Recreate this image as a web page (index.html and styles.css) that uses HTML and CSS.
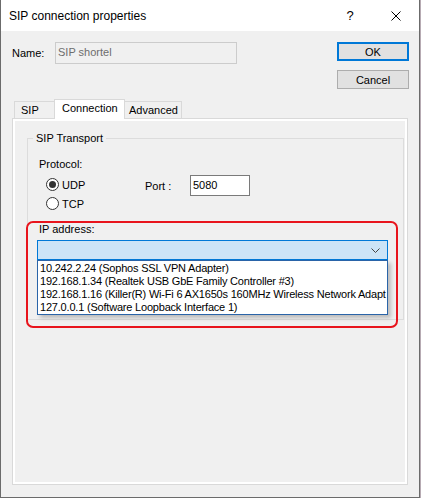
FILE: index.html
```html
<!DOCTYPE html>
<html lang="en">
<head>
    <meta charset="UTF-8">
    <title>SIP connection properties</title>
    <link rel="stylesheet" href="styles.css">
</head>
<body>
    <div class="window">
        <div class="titlebar">
            <span class="title">SIP connection properties</span>
            <span class="caption-btn">?</span>
            <span class="caption-btn">
                <svg width="10" height="10" viewBox="0 0 10 10"><path d="M0.5 0.5L9.5 9.5M9.5 0.5L0.5 9.5" stroke="#000" stroke-width="1" fill="none"/></svg>
            </span>
        </div>

        <div class="top-row">
            <label class="name-label" for="name">Name:</label>
            <input class="name-input" id="name" type="text" value="SIP shortel" disabled>
            <div class="buttons">
                <button class="btn btn-default">OK</button>
                <button class="btn">Cancel</button>
            </div>
        </div>

        <div class="tabs">
            <div class="tab tab-sip">SIP</div>
            <div class="tab active">Connection</div>
            <div class="tab tab-adv">Advanced</div>
        </div>

        <div class="tab-page">
            <div class="page-inner">
                <fieldset class="group">
                    <legend>SIP Transport</legend>
                    <div class="group-body">
                        <div class="protocol-label">Protocol:</div>
                        <div class="protocol-row">
                            <div class="radios">
                                <label class="radio"><input type="radio" name="proto" checked> UDP</label>
                                <label class="radio"><input type="radio" name="proto"> TCP</label>
                            </div>
                            <label class="port-label" for="port">Port :</label>
                            <input class="port-input" id="port" type="text" value="5080">
                        </div>

                        <div class="ip-label">IP address:</div>
                        <div class="combo">
                            <svg width="9" height="5" viewBox="0 0 9 5"><path d="M0.5 0.5L4.5 4.5L8.5 0.5" stroke="#444" stroke-width="1" fill="none"/></svg>
                        </div>
                        <ul class="dropdown">
                            <li>10.242.2.24 (Sophos SSL VPN Adapter)</li>
                            <li>192.168.1.34 (Realtek USB GbE Family Controller #3)</li>
                            <li>192.168.1.16 (Killer(R) Wi-Fi 6 AX1650s 160MHz Wireless Network Adapt</li>
                            <li>127.0.0.1 (Software Loopback Interface 1)</li>
                        </ul>
                    </div>
                </fieldset>
            </div>
        </div>

        <!-- annotation drawn over the dialog -->
        <div class="highlight"></div>
    </div>
</body>
</html>
```

FILE: styles.css
```css
body {
    margin: 0;
    background: #b7abb3;
    font-family: "Liberation Sans", Arial, sans-serif;
    font-size: 11px;
    color: #000;
}
.window {
    position: relative;
    width: 418px;
    height: 497px;
    background: #f0f0f0;
    border: 1px solid #6b6b6b;
    border-top: none;
}
.titlebar {
    height: 31px;
    background: #fff;
    display: flex;
    align-items: center;
    padding-left: 8px;
    font-size: 12px;
}
.title {
    flex: 1;
}
.caption-btn {
    width: 46px;
    height: 31px;
    display: flex;
    align-items: center;
    justify-content: center;
    font-size: 13px;
}
.top-row {
    display: flex;
    align-items: flex-start;
    padding: 11px 10px 0 11px;
}
.name-label {
    width: 43px;
    line-height: 22px;
}
.name-input {
    width: 182px;
    height: 22px;
    box-sizing: border-box;
    border: 1px solid #cccccc;
    background: #f0f0f0;
    color: #6d6d6d;
    font: inherit;
    padding: 0 2px 2px;
    margin: 0;
}
.buttons {
    margin-left: auto;
    display: flex;
    flex-direction: column;
    gap: 9px;
}
.btn {
    width: 72px;
    height: 19px;
    box-sizing: border-box;
    border: 1px solid #adadad;
    background: #e1e1e1;
    font: inherit;
    padding: 0;
    margin: 0;
}
.btn-default {
    border: 2px solid #0078d7;
}
.tabs {
    display: flex;
    align-items: flex-end;
    height: 19px;
    margin: 10px 0 0 13px;
}
.tab {
    height: 17px;
    box-sizing: border-box;
    border: 1px solid #d9d9d9;
    border-bottom: none;
    padding-top: 1px;
    background: #f0f0f0;
    line-height: 14px;
    white-space: nowrap;
}
.tab-sip {
    width: 41px;
    padding-left: 6px;
}
.tab-adv {
    width: 58px;
    padding-left: 4px;
}
.tab.active {
    position: relative;
    z-index: 1;
    width: 71px;
    height: 20px;
    margin: 0 -1px -1px;
    padding-left: 7px;
    background: #fff;
}
.tab-page {
    margin-left: 11px;
    width: 390px;
    height: 361px;
    border: 1px solid #d9d9d9;
    background: #fff;
    padding: 2px;
}
.page-inner {
    height: 100%;
    background: #f0f0f0;
    padding: 11px 1px 0 12px;
    box-sizing: border-box;
}
.group {
    margin: 0;
    padding: 0 5px 4px;
    border: 1px solid #dcdcdc;
    min-width: 0;
}
.group legend {
    padding: 0 3px;
    line-height: 13px;
}
.group-body {
    padding: 0 6px;
}
.protocol-label {
    margin-top: 13px;
    line-height: 13px;
}
.protocol-row {
    display: flex;
    align-items: flex-start;
    margin-top: 4px;
}
.radios {
    width: 99px;
    padding-left: 7px;
}
.radio {
    display: flex;
    align-items: center;
    height: 19px;
}
.radio input {
    appearance: none;
    width: 13px;
    height: 13px;
    margin: 0 3px 0 0;
    border: 1px solid #333;
    border-radius: 50%;
    background: #fff;
    box-sizing: border-box;
    display: grid;
    place-content: center;
}
.radio input:checked::before {
    content: "";
    width: 7px;
    height: 7px;
    border-radius: 50%;
    background: #333;
}
.port-label {
    width: 45px;
    line-height: 21px;
    padding-top: 1px;
}
.port-input {
    width: 60px;
    height: 21px;
    box-sizing: border-box;
    border: 1px solid #7a7a7a;
    background: #fff;
    font: inherit;
    padding: 0 2px 1px;
    margin: 0;
}
.ip-label {
    margin-top: 10px;
    line-height: 13px;
}
.combo {
    margin: 4px 0 0 -2px;
    width: 351px;
    height: 20px;
    box-sizing: border-box;
    border: 1px solid #0078d7;
    background: #cce4f7;
    display: flex;
    align-items: center;
    justify-content: flex-end;
    padding-right: 7px;
}
.dropdown {
    list-style: none;
    margin: 0 0 0 -2px;
    padding: 1px 0 0;
    width: 351px;
    height: 55px;
    box-sizing: border-box;
    border: 1px solid #2a64a8;
    background: #fff;
    box-shadow: 3px 3px 4px rgba(0, 0, 0, 0.22);
    overflow: hidden;
}
.dropdown li {
    height: 13px;
    line-height: 13px;
    padding-left: 2px;
    white-space: nowrap;
    letter-spacing: -0.2px;
}
.highlight {
    position: absolute;
    left: 25px;
    top: 221px;
    width: 368px;
    height: 103px;
    border: 2px solid #e8141c;
    border-radius: 7px;
}
```
